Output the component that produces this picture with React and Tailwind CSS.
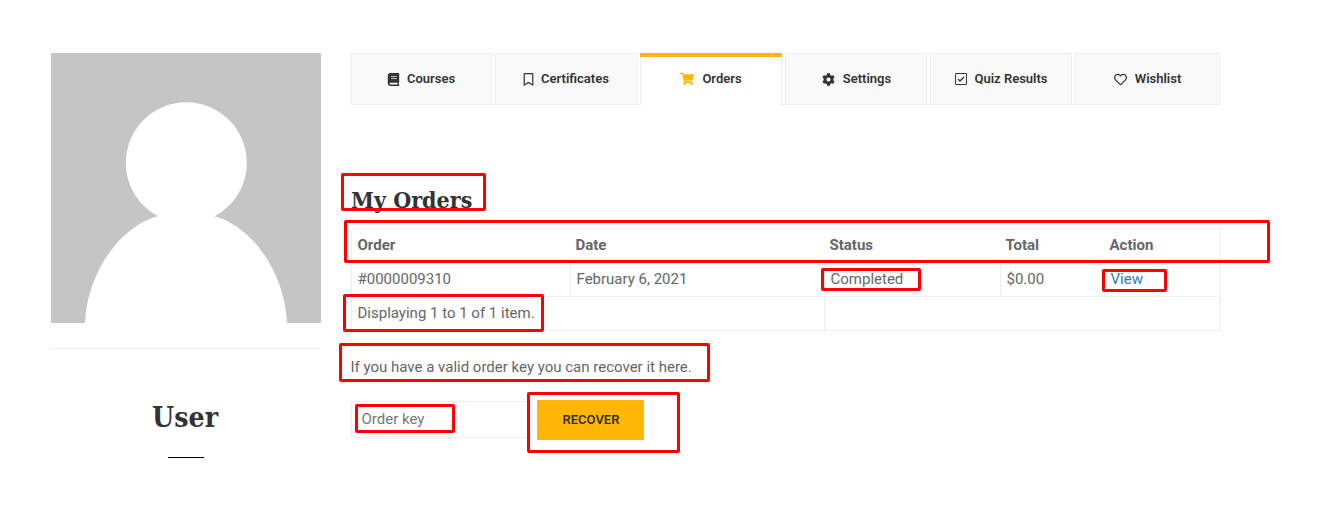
import { FaBook, FaRegBookmark, FaShoppingCart, FaCog, FaRegHeart } from "react-icons/fa";

function CheckSquare() {
  return (
    <svg width="12" height="12" viewBox="0 0 12 12" fill="none" stroke="currentColor">
      <rect x="0.5" y="0.5" width="11" height="11" rx="0.5" />
      <path d="M3 6l2 2 4-4" strokeWidth="1.3" />
    </svg>
  );
}

const tabs = [
  { label: "Courses", icon: <FaBook size={13} />, width: "w-[141px]", gap: "gap-[7px]", shift: "pr-px" },
  { label: "Certificates", icon: <FaRegBookmark size={13} />, width: "w-[142px]", gap: "gap-[6px]", shift: "pr-px" },
  { label: "Orders", icon: <FaShoppingCart size={14} />, width: "w-[142px]", gap: "gap-[8px]", shift: "", active: true },
  { label: "Settings", icon: <FaCog size={13} />, width: "w-[142px]", gap: "gap-[8px]", shift: "pl-px" },
  { label: "Quiz Results", icon: <CheckSquare />, width: "w-[142px]", gap: "gap-[7px]", shift: "pl-px" },
  { label: "Wishlist", icon: <FaRegHeart size={13} />, width: "w-[145px]", gap: "gap-[8px]", shift: "" },
];

// Red outlines that call out parts of the page
const marks = [
  "left-[341px] top-[173px] w-[145px] h-[38px]",
  "left-[344px] top-[220px] w-[926px] h-[43px]",
  "left-[821px] top-[268px] w-[100px] h-[23px]",
  "left-[1102px] top-[269px] w-[65px] h-[23px]",
  "left-[343px] top-[294px] w-[201px] h-[38px]",
  "left-[339px] top-[343px] w-[371px] h-[39px]",
  "left-[355px] top-[404px] w-[100px] h-[29px]",
  "left-[527px] top-[392px] w-[153px] h-[61px]",
];

const slab = "font-['Roboto_Slab','DejaVu_Serif',serif] font-bold text-[#333]";

export default function App() {
  return (
    <div className="relative flex h-[522px] w-[1330px] gap-[30px] overflow-hidden bg-white pl-[51px] pt-[53px] font-['Roboto',sans-serif] text-[15px] text-[#666]">
      <aside className="flex w-[270px] flex-col items-center">
        <svg width="270" height="270" viewBox="0 0 270 270" className="shrink-0">
          <rect width="270" height="270" fill="#c5c5c5" />
          <circle cx="135.3" cy="109.8" r="60.5" fill="#fff" />
          <path d="M34 270C36 222 67 174 107 163Q135 153 163 163C203 174 234 222 236 270Z" fill="#fff" />
        </svg>
        <hr className="mt-[25px] w-full border-[#eee]" />
        <h2 className={`mt-[50px] h-[38px] pr-px text-[27px] leading-[38px] ${slab}`}>
          <span className="inline-block scale-x-[0.94]">User</span>
        </h2>
        <div className="mt-[20px] h-px w-9 bg-black" />
      </aside>

      <main className="w-[870px]">
        <nav className="flex h-[52px] gap-[3px] border-b border-[#eee] text-[13px] font-semibold text-[#333]">
          {tabs.map((t) => (
            <a
              key={t.label}
              className={`flex items-center justify-center border-x border-[#eee] ${t.width} ${t.gap} ${t.shift} ${
                t.active ? "relative h-[52px] bg-white before:absolute before:-inset-x-px before:top-0 before:h-1 before:bg-[#ffb606]" : "h-[51px] border-t bg-[#f9f9f9]"
              }`}
            >
              <span className={t.active ? "text-[#ffb606]" : ""}>{t.icon}</span>
              {t.label}
            </a>
          ))}
        </nav>

        <h3 className={`mt-[80px] h-[30px] text-[23px] leading-[30px] ${slab}`}>
          <span className="inline-block origin-left scale-x-[0.9] whitespace-nowrap">My Orders</span>
        </h3>

        <table className="mt-[13px] h-[103px] w-[870px] table-fixed border-separate border-spacing-0 border border-[#eee] text-left leading-[20px]">
          <colgroup>
            <col className="w-[218px]" />
            <col className="w-[254px]" />
            <col className="w-[176px]" />
            <col className="w-[104px]" />
            <col />
          </colgroup>
          <thead>
            <tr className="h-[33px] font-bold">
              <th className="pb-[2px] pl-[5.5px]">Order</th>
              <th className="pb-[2px] pl-[5.5px]">Date</th>
              <th className="pb-[2px] pl-[5.5px]">Status</th>
              <th className="pb-[2px] pl-[5.5px]">Total</th>
              <th className="pb-[2px] pl-[5.5px]">Action</th>
            </tr>
          </thead>
          <tbody>
            <tr className="h-[35px]">
              <td className="border-b border-[#eee] pl-[5.5px]">#0000009310</td>
              <td className="border-b border-l border-[#eee] pl-[5.5px]">February 6, 2021</td>
              <td className="border-b border-l border-[#eee] pl-[5.5px]">Completed</td>
              <td className="border-b border-l border-[#eee] pl-[5.5px]">$0.00</td>
              <td className="border-b border-l border-[#eee] pl-[5.5px] text-[#337ab7]">View</td>
            </tr>
            <tr className="h-[33px]">
              <td colSpan={2} className="pb-[2px] pl-[5.5px]">Displaying 1 to 1 of 1 item.</td>
              <td colSpan={3} className="border-l border-[#eee]" />
            </tr>
          </tbody>
        </table>

        <p className="-ml-[0.5px] mt-[25px] leading-[22px]">If you have a valid order key you can recover it here.</p>
        <form className="mt-[22px] flex items-start gap-1">
          <input
            placeholder="Order key"
            className="mt-px h-[37px] w-[182px] rounded-[2px] border border-[#eee] pb-[2px] pl-[9.5px] placeholder:text-[#777]"
          />
          <button type="button" className="h-[40px] w-[107px] bg-[#ffb606] pl-px text-[13px] font-semibold text-[#333]">
            RECOVER
          </button>
        </form>
      </main>

      {marks.map((m) => (
        <div key={m} className={`pointer-events-none absolute rounded-[2px] border-[3px] border-[#f00] ${m}`} />
      ))}
    </div>
  );
}
